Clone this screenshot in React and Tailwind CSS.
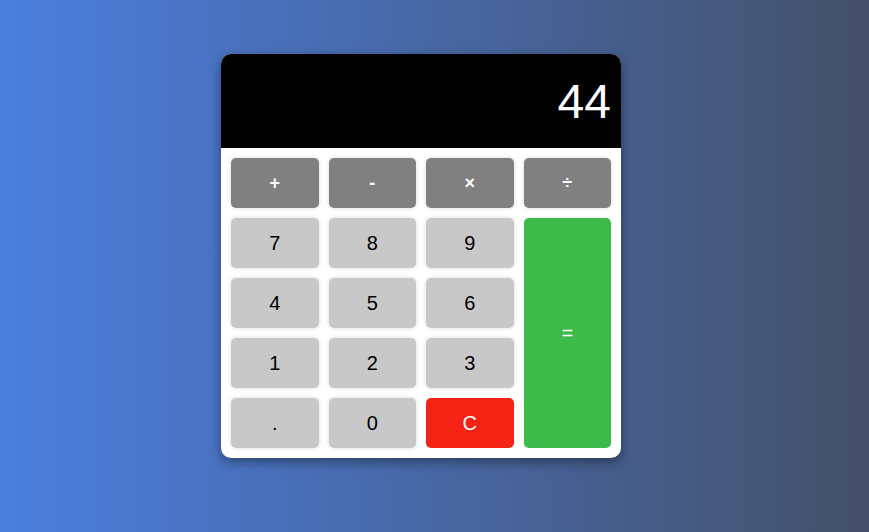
import React from "react";

const num = "bg-[#c8c8c8] text-black text-[20px] rounded-[5px] shadow-[0_0_4px_rgba(0,0,0,0.15)] flex items-center justify-center";
const op = "bg-[#808080] text-white text-[18px] font-bold rounded-[5px] shadow-[0_0_4px_rgba(0,0,0,0.15)] flex items-center justify-center";

export default function App() {
  return (
    <div className="w-[869px] h-[532px] flex items-start justify-start pl-[221px] pt-[54px] bg-[linear-gradient(to_right,#4b7fdf,#445069)] font-['Liberation_Sans',Arial,sans-serif]">
      <div className="w-[400px] h-[404px] bg-white rounded-[10px] overflow-hidden shadow-[0_4px_12px_rgba(0,0,0,0.4)] flex flex-col">
        <div className="h-[94px] bg-black text-white text-[48px] flex items-center justify-end pr-[10px] pt-[1px]">44</div>
        <div className="flex-1 p-[10px] grid grid-cols-4 grid-rows-5 gap-[10px]">
          <div className={op}>+</div>
          <div className={op}>-</div>
          <div className={op}>×</div>
          <div className={op}>÷</div>
          <div className={num}>7</div>
          <div className={num}>8</div>
          <div className={num}>9</div>
          <div className="row-span-4 bg-[#3cba4a] text-white text-[20px] rounded-[5px] flex items-center justify-center">=</div>
          <div className={num}>4</div>
          <div className={num}>5</div>
          <div className={num}>6</div>
          <div className={num}>1</div>
          <div className={num}>2</div>
          <div className={num}>3</div>
          <div className={num}>.</div>
          <div className={num}>0</div>
          <div className="bg-[#f52314] text-white text-[20px] rounded-[5px] flex items-center justify-center">C</div>
        </div>
      </div>
    </div>
  );
}
